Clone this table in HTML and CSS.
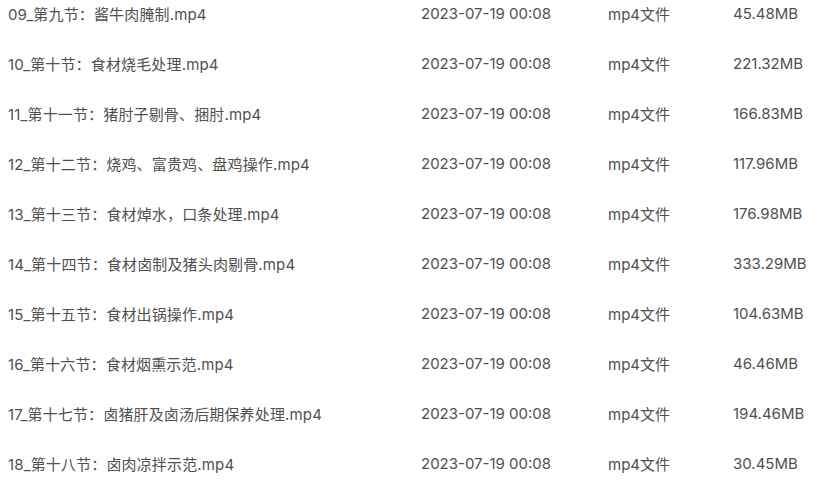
FILE: index.html
```html
<!DOCTYPE html>
<html lang="zh">
<head>
<meta charset="utf-8">
<link rel="stylesheet" href="styles.css">
</head>
<body>
<div class="list">
  <div class="row"><span class="name">09_第九节：酱牛肉腌制.mp4</span><span>2023-07-19 00:08</span><span>mp4文件</span><span>45.48MB</span></div>
  <div class="row"><span class="name">10_第十节：食材烧毛处理.mp4</span><span>2023-07-19 00:08</span><span>mp4文件</span><span>221.32MB</span></div>
  <div class="row"><span class="name">11_第十一节：猪肘子剔骨、捆肘.mp4</span><span>2023-07-19 00:08</span><span>mp4文件</span><span>166.83MB</span></div>
  <div class="row"><span class="name">12_第十二节：烧鸡、富贵鸡、盘鸡操作.mp4</span><span>2023-07-19 00:08</span><span>mp4文件</span><span>117.96MB</span></div>
  <div class="row"><span class="name">13_第十三节：食材焯水，口条处理.mp4</span><span>2023-07-19 00:08</span><span>mp4文件</span><span>176.98MB</span></div>
  <div class="row"><span class="name">14_第十四节：食材卤制及猪头肉剔骨.mp4</span><span>2023-07-19 00:08</span><span>mp4文件</span><span>333.29MB</span></div>
  <div class="row"><span class="name">15_第十五节：食材出锅操作.mp4</span><span>2023-07-19 00:08</span><span>mp4文件</span><span>104.63MB</span></div>
  <div class="row"><span class="name">16_第十六节：食材烟熏示范.mp4</span><span>2023-07-19 00:08</span><span>mp4文件</span><span>46.46MB</span></div>
  <div class="row"><span class="name">17_第十七节：卤猪肝及卤汤后期保养处理.mp4</span><span>2023-07-19 00:08</span><span>mp4文件</span><span>194.46MB</span></div>
  <div class="row"><span class="name">18_第十八节：卤肉凉拌示范.mp4</span><span>2023-07-19 00:08</span><span>mp4文件</span><span>30.45MB</span></div>
</div>
</body>
</html>
```
FILE: styles.css
```css
html, body {
  margin: 0;
  padding: 0;
  background: #ffffff;
  overflow: hidden;
}
body {
  font-family: "Inter", "Noto Sans CJK SC", sans-serif;
  font-size: 15px;
  color: #505050;
}
.list {
  margin-top: -12px;
  padding-left: 8px;
}
.row {
  display: grid;
  grid-template-columns: 413px 187px 125px 1fr;
  height: 50px;
  align-items: center;
  white-space: nowrap;
}
.name {
  letter-spacing: 0.15px;
}
```
